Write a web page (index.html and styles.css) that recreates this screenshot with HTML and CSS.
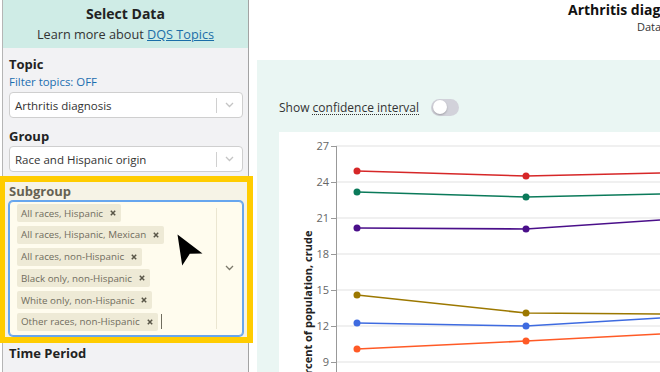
FILE: index.html
```html
<!DOCTYPE html>
<html lang="en">
<head>
    <meta charset="UTF-8">
    <meta name="viewport" content="width=device-width, initial-scale=1.0">
    <title>DQS - Select Data</title>
    <link rel="stylesheet" href="styles.css">
</head>
<body>
    <div class="page">
        <aside class="sidebar">
            <div class="sidebar-head">
                <div class="head-title">Select Data</div>
                <div class="head-sub">Learn more about <a href="#">DQS Topics</a></div>
            </div>
            <div class="sidebar-body">
                <div class="field-label">Topic</div>
                <div class="filter-link">Filter topics: OFF</div>
                <div class="select">
                    <span class="select-value">Arthritis diagnosis</span>
                    <span class="select-sep"></span>
                    <span class="select-arrow">
                        <svg width="9" height="6" viewBox="0 0 9 6"><path d="M1 1l3.5 3.5L8 1" fill="none" stroke="#c4c4c4" stroke-width="1.3"/></svg>
                    </span>
                </div>

                <div class="field-label spaced">Group</div>
                <div class="select">
                    <span class="select-value">Race and Hispanic origin</span>
                    <span class="select-sep"></span>
                    <span class="select-arrow">
                        <svg width="9" height="6" viewBox="0 0 9 6"><path d="M1 1l3.5 3.5L8 1" fill="none" stroke="#c4c4c4" stroke-width="1.3"/></svg>
                    </span>
                </div>

                <div class="field-label subgroup">Subgroup</div>
                <div class="multi">
                    <div class="multi-values">
                        <span class="tag">All races, Hispanic<svg class="tag-x" width="6" height="6" viewBox="0 0 6 6"><path d="M0.8 0.8l4.4 4.4M5.2 0.8l-4.4 4.4" stroke="#111" stroke-width="1.5"/></svg></span>
                        <span class="tag">All races, Hispanic, Mexican<svg class="tag-x" width="6" height="6" viewBox="0 0 6 6"><path d="M0.8 0.8l4.4 4.4M5.2 0.8l-4.4 4.4" stroke="#111" stroke-width="1.5"/></svg></span>
                        <span class="tag">All races, non-Hispanic<svg class="tag-x" width="6" height="6" viewBox="0 0 6 6"><path d="M0.8 0.8l4.4 4.4M5.2 0.8l-4.4 4.4" stroke="#111" stroke-width="1.5"/></svg></span>
                        <span class="tag">Black only, non-Hispanic<svg class="tag-x" width="6" height="6" viewBox="0 0 6 6"><path d="M0.8 0.8l4.4 4.4M5.2 0.8l-4.4 4.4" stroke="#111" stroke-width="1.5"/></svg></span>
                        <span class="tag">White only, non-Hispanic<svg class="tag-x" width="6" height="6" viewBox="0 0 6 6"><path d="M0.8 0.8l4.4 4.4M5.2 0.8l-4.4 4.4" stroke="#111" stroke-width="1.5"/></svg></span>
                        <div class="tag-row">
                            <span class="tag">Other races, non-Hispanic<svg class="tag-x" width="6" height="6" viewBox="0 0 6 6"><path d="M0.8 0.8l4.4 4.4M5.2 0.8l-4.4 4.4" stroke="#111" stroke-width="1.5"/></svg></span>
                            <span class="caret"></span>
                        </div>
                    </div>
                    <span class="multi-sep"></span>
                    <span class="multi-arrow">
                        <svg width="9" height="6" viewBox="0 0 9 6"><path d="M1 1l3.5 3.5L8 1" fill="none" stroke="#444" stroke-width="1.3"/></svg>
                    </span>
                </div>

                <div class="field-label period">Time Period</div>
            </div>
        </aside>

        <main class="main">
            <div class="chart-head">
                <div class="chart-title">Arthritis diagnosis</div>
                <div class="chart-source">Data source: National Health Interview Survey</div>
            </div>
            <div class="panel">
                <div class="ci-row">
                    <span>Show <span class="dotted">confidence interval</span></span>
                    <span class="switch"><span class="knob"></span></span>
                </div>
                <div class="chart-box">
                    <svg width="381" height="240" viewBox="0 0 381 240">
                        <g stroke="#ebebeb" stroke-width="1.5">
                            <line x1="57" y1="14" x2="381" y2="14"/>
                            <line x1="57" y1="50" x2="381" y2="50"/>
                            <line x1="57" y1="86" x2="381" y2="86"/>
                            <line x1="57" y1="122" x2="381" y2="122"/>
                            <line x1="57" y1="158" x2="381" y2="158"/>
                            <line x1="57" y1="194" x2="381" y2="194"/>
                            <line x1="57" y1="230" x2="381" y2="230"/>
                        </g>
                        <g stroke="#999" stroke-width="1">
                            <line x1="57.5" y1="14" x2="57.5" y2="240"/>
                            <line x1="52" y1="14.5" x2="57" y2="14.5"/>
                            <line x1="52" y1="50.5" x2="57" y2="50.5"/>
                            <line x1="52" y1="86.5" x2="57" y2="86.5"/>
                            <line x1="52" y1="122.5" x2="57" y2="122.5"/>
                            <line x1="52" y1="158.5" x2="57" y2="158.5"/>
                            <line x1="52" y1="194.5" x2="57" y2="194.5"/>
                            <line x1="52" y1="230.5" x2="57" y2="230.5"/>
                        </g>
                        <g class="tick-label" text-anchor="end">
                            <text x="50" y="18">27</text>
                            <text x="50" y="54">24</text>
                            <text x="50" y="90">21</text>
                            <text x="50" y="126">18</text>
                            <text x="50" y="162">15</text>
                            <text x="50" y="198">12</text>
                            <text x="50" y="234">9</text>
                        </g>
                        <text class="axis-title" x="30" y="177" text-anchor="middle" transform="rotate(-90 30 177)">Percent of population, crude</text>

                        <polyline points="78,39 247,44 381,41" fill="none" stroke="#d62728" stroke-width="1.6"/>
                        <polyline points="78,60 247,65 381,62" fill="none" stroke="#0b7a5a" stroke-width="1.6"/>
                        <polyline points="78,96 247,97 381,88" fill="none" stroke="#4a0f8a" stroke-width="1.6"/>
                        <polyline points="78,163 247,181 381,182" fill="none" stroke="#9c7800" stroke-width="1.6"/>
                        <polyline points="78,191 247,194 381,186" fill="none" stroke="#3e6be0" stroke-width="1.6"/>
                        <polyline points="78,217 247,209 381,202" fill="none" stroke="#ff5a26" stroke-width="1.6"/>

                        <circle cx="78" cy="39" r="3.5" fill="#d62728"/>
                        <circle cx="247" cy="44" r="3.5" fill="#d62728"/>
                        <circle cx="78" cy="60" r="3.5" fill="#0b7a5a"/>
                        <circle cx="247" cy="65" r="3.5" fill="#0b7a5a"/>
                        <circle cx="78" cy="96" r="3.5" fill="#4a0f8a"/>
                        <circle cx="247" cy="97" r="3.5" fill="#4a0f8a"/>
                        <circle cx="78" cy="163" r="3.5" fill="#9c7800"/>
                        <circle cx="247" cy="181" r="3.5" fill="#9c7800"/>
                        <circle cx="78" cy="191" r="3.5" fill="#3e6be0"/>
                        <circle cx="247" cy="194" r="3.5" fill="#3e6be0"/>
                        <circle cx="78" cy="217" r="3.5" fill="#ff5a26"/>
                        <circle cx="247" cy="209" r="3.5" fill="#ff5a26"/>
                    </svg>
                </div>
            </div>
        </main>

        <!-- annotation overlay -->
        <div class="highlight"></div>
        <svg class="pointer" width="27" height="33" viewBox="0 0 27 33">
            <polygon points="0.5,0.5 25.5,19.5 12.8,19.8 5.2,31.5" fill="#000"/>
        </svg>
    </div>
</body>
</html>
```

FILE: styles.css
```css
body {
    margin: 0;
    width: 660px;
    height: 372px;
    overflow: hidden;
    background-color: #ffffff;
    font-family: "Open Sans", "Noto Sans", sans-serif;
    color: #222;
}

.page {
    position: relative;
    display: flex;
    height: 372px;
}

/* Barra lateral */
.sidebar {
    flex: none;
    width: 245px;
    margin-left: 2px;
    border-left: 1px solid #b5b5b5;
    border-right: 1px solid #a3a3a3;
    background-color: #f2f2f4;
}

.sidebar-head {
    height: 48px;
    padding-top: 4px;
    box-sizing: border-box;
    background-color: #cfece6;
    text-align: center;
}

.head-title {
    font-size: 14px;
    font-weight: bold;
    line-height: 20px;
}

.head-sub {
    font-size: 12.7px;
    line-height: 20px;
    color: #333;
}

.head-sub a {
    color: #1b6ea8;
    text-decoration: underline;
}

.sidebar-body {
    padding: 8px 5px 0 6px;
}

.field-label {
    font-size: 13px;
    font-weight: bold;
    line-height: 17px;
    color: #222;
}

.field-label.spaced {
    margin-top: 10px;
}

.field-label.subgroup {
    margin-top: 11px;
    margin-bottom: 1px;
}

.field-label.period {
    margin-top: 9px;
}

.filter-link {
    font-size: 11.4px;
    line-height: 18px;
    color: #1b6eb0;
}

.select {
    display: flex;
    align-items: center;
    height: 26px;
    margin-top: 1px;
    box-sizing: border-box;
    border: 1px solid #cfcfcf;
    border-radius: 4px;
    background-color: #ffffff;
}

.select-value {
    flex: 1;
    padding-left: 5px;
    font-size: 11.5px;
    color: #333;
}

.select-sep {
    width: 1px;
    height: 15px;
    background-color: #d0d0d0;
}

.select-arrow {
    display: flex;
    justify-content: center;
    width: 25px;
}

/* Subgrupo (multi select) */
.multi {
    display: flex;
    align-items: stretch;
    border: 1px solid #2684ff;
    border-radius: 4px;
    box-shadow: 0 0 0 1px #2684ff;
    background-color: #ffffff;
}

.multi-values {
    flex: 1;
    display: flex;
    flex-direction: column;
    align-items: flex-start;
    gap: 3.8px;
    padding: 2px 0 4px 7px;
}

.tag-row {
    display: flex;
    align-items: center;
}

.tag {
    display: inline-flex;
    align-items: center;
    height: 18px;
    padding: 0 5px 0 4px;
    border-radius: 2px;
    background-color: #e7e5dd;
    font-size: 9.8px;
    color: #2e2e2e;
    white-space: nowrap;
}

.tag-x {
    margin-left: 7px;
}

.caret {
    width: 1px;
    height: 15px;
    margin-left: 3px;
    background-color: #333;
}

.multi-sep {
    width: 1px;
    margin: 6px 0;
    background-color: #e3e0d6;
}

.multi-arrow {
    display: flex;
    align-items: center;
    justify-content: center;
    width: 25px;
}

/* Area principal */
.main {
    flex: 1;
    min-width: 0;
    overflow: hidden;
}

.chart-head {
    height: 60px;
    white-space: nowrap;
}

.chart-title {
    padding-left: 319px;
    font-size: 14px;
    font-weight: bold;
    line-height: 20px;
    color: #111;
}

.chart-source {
    padding-left: 388px;
    font-size: 11px;
    line-height: 14px;
    color: #333;
}

.panel {
    height: 312px;
    margin-left: 8px;
    padding: 38px 0 0 22px;
    box-sizing: border-box;
    background-color: #eaf6f3;
}

.ci-row {
    display: flex;
    align-items: center;
    gap: 12px;
    height: 18px;
    font-size: 12px;
    color: #333;
    white-space: nowrap;
}

.dotted {
    text-decoration: underline dotted;
    text-underline-offset: 2px;
}

.switch {
    position: relative;
    width: 28px;
    height: 17px;
    border-radius: 9px;
    background-color: #d2d2da;
}

.knob {
    position: absolute;
    left: 2px;
    top: 1.5px;
    width: 14px;
    height: 14px;
    border-radius: 50%;
    background-color: #ffffff;
    box-shadow: 0 1px 2px rgba(0, 0, 0, 0.25);
}

.chart-box {
    height: 240px;
    margin-top: 16px;
    background-color: #ffffff;
}

.chart-box svg {
    display: block;
}

.tick-label {
    font-family: "Open Sans", "Noto Sans", sans-serif;
    font-size: 11px;
    fill: #666;
}

.axis-title {
    font-family: "Open Sans", "Noto Sans", sans-serif;
    font-size: 11px;
    font-weight: bold;
    fill: #222;
    dominant-baseline: middle;
}

/* Destaque amarelo e ponteiro do mouse */
.highlight {
    position: absolute;
    left: 0;
    top: 176px;
    width: 253px;
    height: 167px;
    box-sizing: border-box;
    border: 6px solid #ffcc00;
    border-left-width: 5px;
    background-color: rgba(255, 245, 200, 0.3);
    pointer-events: none;
}

.pointer {
    position: absolute;
    left: 177px;
    top: 234px;
}
```
